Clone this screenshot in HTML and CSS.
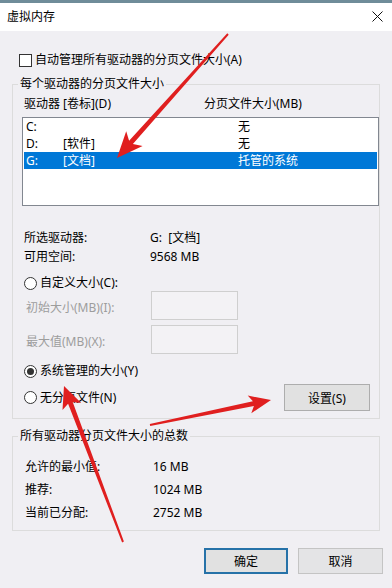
FILE: index.html
```html
<!DOCTYPE html>
<html lang="zh-CN">
<head>
    <meta charset="UTF-8">
    <meta name="viewport" content="width=device-width, initial-scale=1.0">
    <title>虚拟内存</title>
    <link rel="stylesheet" href="styles.css">
</head>
<body>
    <div class="backdrop-strip"></div>
    <div class="titlebar">
        <span class="title">虚拟内存</span>
        <svg class="close-icon" width="11" height="11" viewBox="0 0 11 11">
            <path d="M0.5 0.5 L10.5 10.5 M10.5 0.5 L0.5 10.5" stroke="#111" stroke-width="1" fill="none"/>
        </svg>
    </div>

    <div class="dialog">
        <div class="check-row">
            <span class="checkbox"></span>
            <span>自动管理所有驱动器的分页文件大小(A)</span>
        </div>

        <fieldset class="group">
            <legend>每个驱动器的分页文件大小</legend>
            <div class="group-body drives-body">
                <div class="list-head">
                    <span>驱动器 [卷标](D)</span>
                    <span>分页文件大小(MB)</span>
                </div>
                <div class="listbox">
                    <div class="list-row"><span>C:</span><span></span><span>无</span></div>
                    <div class="list-row"><span>D:</span><span>[软件]</span><span>无</span></div>
                    <div class="list-row selected"><span>G:</span><span>[文档]</span><span>托管的系统</span></div>
                </div>

                <div class="info">
                    <div class="info-row"><span>所选驱动器:</span><span>G:&nbsp; [文档]</span></div>
                    <div class="info-row"><span>可用空间:</span><span>9568 MB</span></div>
                </div>

                <div class="radio-row custom-radio">
                    <span class="radio"></span>
                    <span>自定义大小(C):</span>
                </div>
                <div class="size-row">
                    <span class="disabled">初始大小(MB)(I):</span>
                    <span class="textbox"></span>
                </div>
                <div class="size-row second">
                    <span class="disabled">最大值(MB)(X):</span>
                    <span class="textbox"></span>
                </div>

                <div class="radio-row system-radio">
                    <span class="radio checked"></span>
                    <span>系统管理的大小(Y)</span>
                </div>
                <div class="none-row">
                    <div class="radio-row">
                        <span class="radio"></span>
                        <span>无分页文件(N)</span>
                    </div>
                    <button type="button" class="win-btn set-btn">设置(S)</button>
                </div>
            </div>
        </fieldset>

        <fieldset class="group totals">
            <legend>所有驱动器分页文件大小的总数</legend>
            <div class="group-body totals-body">
                <div class="total-row"><span>允许的最小值:</span><span>16 MB</span></div>
                <div class="total-row"><span>推荐:</span><span>1024 MB</span></div>
                <div class="total-row"><span>当前已分配:</span><span>2752 MB</span></div>
            </div>
        </fieldset>

        <div class="actions">
            <button type="button" class="win-btn ok-btn">确定</button>
            <button type="button" class="win-btn cancel-btn">取消</button>
        </div>
    </div>

    <!-- red arrows drawn over the screenshot -->
    <svg class="arrows" width="392" height="588" viewBox="0 0 392 588">
        <polygon fill="#e01f1f" points="228.7,34.7 132.9,144.1 142.6,146 117,158 126.2,131.3 129.1,140.7 227.3,33.3"/>
        <polygon fill="#e01f1f" points="150.2,426 253.9,406.1 251.3,413.2 271,400 247.7,395.6 252.9,401.2 149.8,424"/>
        <polygon fill="#e01f1f" points="123.9,541.6 72.7,401.9 81.2,403.1 64,386 62.5,410.1 68.1,403.7 122.1,542.4"/>
    </svg>
</body>
</html>
```

FILE: styles.css
```css
* {
    box-sizing: border-box;
}
body {
    margin: 0;
    width: 392px;
    height: 588px;
    overflow: hidden;
    position: relative;
    background: #f0eff3;
    font-family: "Noto Sans", "Noto Sans CJK SC", sans-serif;
    font-size: 12px;
    color: #000;
}
.backdrop-strip {
    height: 3px;
    background: #6f8c99;
}
.titlebar {
    height: 28px;
    background: #fff;
    display: flex;
    align-items: center;
    justify-content: space-between;
    padding: 0 9px 0 7px;
    line-height: 28px;
}
.close-icon {
    margin-top: -2px;
}
.dialog {
    padding: 0 12px;
}
.check-row {
    margin-top: 21px;
    height: 16px;
    line-height: 16px;
    display: flex;
    align-items: center;
    gap: 3px;
    padding-left: 7px;
}
.checkbox {
    width: 13px;
    height: 13px;
    border: 1px solid #333;
    background: #fff;
}
.group {
    margin: 8px 0 0 0;
    padding: 0;
    border: 1px solid #dcdcdc;
    min-width: 0;
}
.group legend {
    margin-left: 5px;
    padding: 0 2px;
    line-height: 16px;
}
.group-body {
    padding-left: 9px;
}
.drives-body {
    padding-bottom: 7px;
}
.list-head {
    margin-top: 4px;
    line-height: 16px;
    display: grid;
    grid-template-columns: 180px 1fr;
    padding-left: 2px;
}
.listbox {
    margin-top: 5px;
    height: 89px;
    border: 1px solid #828790;
    background: #fff;
    padding: 0 1px;
}
.list-row {
    height: 17px;
    line-height: 17px;
    display: grid;
    grid-template-columns: 37px 175px 1fr;
    padding-left: 2px;
}
.list-row.selected {
    background: #0078d7;
    color: #fff;
}
.info {
    margin-top: 22px;
}
.info-row {
    line-height: 19px;
    display: grid;
    grid-template-columns: 126px 1fr;
    padding-left: 2px;
}
.radio-row {
    height: 16px;
    line-height: 16px;
    display: flex;
    align-items: center;
    gap: 3px;
    padding-left: 2px;
}
.custom-radio {
    margin-top: 9px;
}
.radio {
    width: 13px;
    height: 13px;
    border: 1px solid #333;
    border-radius: 50%;
    background: #fff;
    display: flex;
    align-items: center;
    justify-content: center;
}
.radio.checked::after {
    content: "";
    width: 7px;
    height: 7px;
    border-radius: 50%;
    background: #333;
}
.size-row {
    height: 29px;
    display: grid;
    grid-template-columns: 125px 87px;
    align-items: center;
    padding-left: 4px;
}
.size-row.second {
    margin-top: 5px;
}
.disabled {
    color: #9d9d9d;
    padding-top: 3px;
}
.textbox {
    height: 29px;
    border: 1px solid #cfcfcf;
    background: #f3f2f5;
}
.system-radio {
    margin-top: 9px;
}
.none-row {
    margin-top: 5px;
    height: 27px;
    display: flex;
    align-items: center;
    justify-content: space-between;
    padding-right: 9px;
}
.win-btn {
    font-family: "Noto Sans", "Noto Sans CJK SC", sans-serif;
    font-size: 12px;
    color: #000;
    background: #e1e1e1;
    border: 1px solid #adadad;
    padding: 0;
    margin: 0;
}
.set-btn {
    width: 86px;
    height: 27px;
}
.totals {
    margin-top: 9px;
}
.totals-body {
    padding: 11px 0 6px 12px;
}
.total-row {
    line-height: 23px;
    display: grid;
    grid-template-columns: 128px 1fr;
}
.actions {
    margin: 17px -3px 0 0;
    display: flex;
    justify-content: flex-end;
    gap: 10px;
}
.ok-btn {
    width: 84px;
    height: 26px;
    border: 2px solid #2672a8;
}
.cancel-btn {
    width: 85px;
    height: 26px;
    background: #e4e4e6;
    border-color: #c4c4c4;
}
.arrows {
    position: absolute;
    left: 0;
    top: 0;
    pointer-events: none;
}
```
